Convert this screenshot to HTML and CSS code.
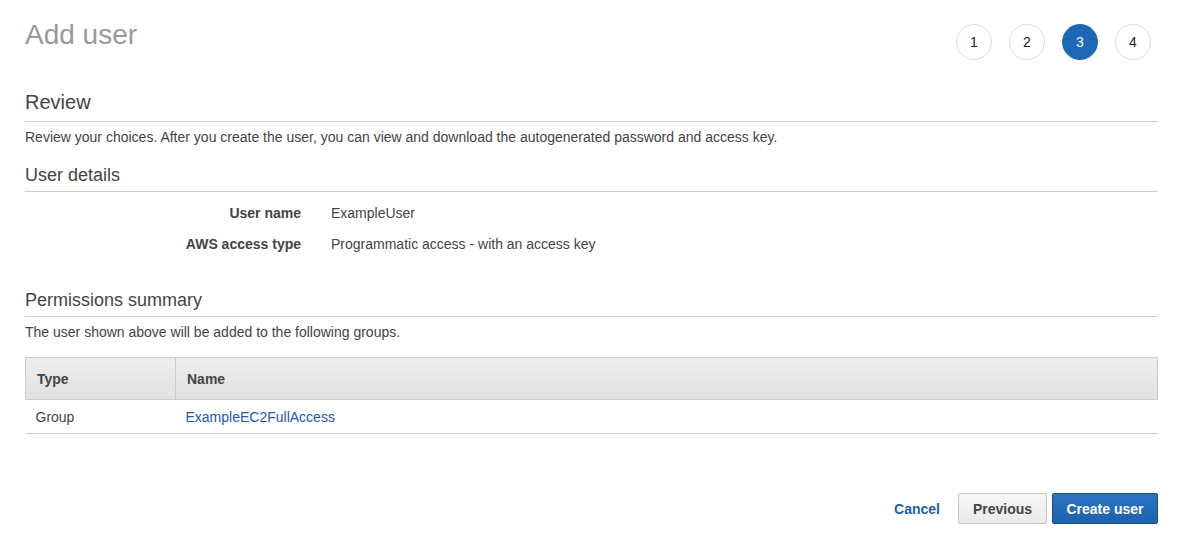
FILE: index.html
```html
<!DOCTYPE html>
<html>
<head>
<meta charset="utf-8">
<link rel="stylesheet" href="styles.css">
</head>
<body>
<div class="page">
  <div class="header">
    <h1 class="title">Add user</h1>
    <ol class="steps">
      <li class="step">1</li>
      <li class="step">2</li>
      <li class="step active">3</li>
      <li class="step">4</li>
    </ol>
  </div>

  <h2 class="section-title review">Review</h2>
  <p class="desc">Review your choices. After you create the user, you can view and download the autogenerated password and access key.</p>

  <h3 class="sub-title">User details</h3>
  <div class="details">
    <div class="label">User name</div><div class="value">ExampleUser</div>
    <div class="label">AWS access type</div><div class="value">Programmatic access - with an access key</div>
  </div>

  <h3 class="sub-title perm">Permissions summary</h3>
  <p class="desc">The user shown above will be added to the following groups.</p>

  <table class="groups">
    <thead>
      <tr><th class="col-type">Type</th><th>Name</th></tr>
    </thead>
    <tbody>
      <tr><td>Group</td><td><a class="link" href="#">ExampleEC2FullAccess</a></td></tr>
    </tbody>
  </table>

  <div class="actions">
    <a class="cancel" href="#">Cancel</a>
    <button class="btn btn-secondary">Previous</button>
    <button class="btn btn-primary">Create user</button>
  </div>
</div>
</body>
</html>
```

FILE: styles.css
```css
* { box-sizing: border-box; }
body {
  margin: 0;
  font-family: "Liberation Sans", Arial, sans-serif;
  color: #444;
  background: #fff;
  font-size: 14px;
}
.page {
  width: 1133px;
  margin-left: 25px;
}
.header {
  display: flex;
  justify-content: space-between;
  align-items: flex-start;
  height: 85px;
}
.title {
  margin: 0;
  padding-top: 19px;
  font-size: 28px;
  font-weight: normal;
  color: #999;
  line-height: 32px;
}
.steps {
  list-style: none;
  margin: 24px 7px 0 0;
  padding: 0;
  display: flex;
  gap: 17px;
}
.step {
  width: 36px;
  height: 36px;
  border: 1px solid #ddd;
  border-radius: 50%;
  display: flex;
  align-items: center;
  justify-content: center;
  font-size: 14px;
  color: #222;
}
.step.active {
  background: #1e67b4;
  border-color: #1e67b4;
  color: #fff;
}
.section-title {
  margin: 0;
  font-size: 20px;
  font-weight: normal;
  color: #444;
  line-height: 24px;
  padding-bottom: 7px;
  border-bottom: 1px solid #ccc;
}
.review { margin-top: 5px; }
.desc {
  margin: 5px 0 0;
  line-height: 20px;
  font-size: 14px;
  color: #444;
}
.sub-title {
  margin: 17px 0 0;
  font-size: 18px;
  font-weight: normal;
  color: #444;
  line-height: 22px;
  padding-bottom: 5px;
  border-bottom: 1px solid #ccc;
}
.sub-title.perm { margin-top: 35px; }
.details {
  display: grid;
  grid-template-columns: 276px 1fr;
  column-gap: 30px;
  row-gap: 11px;
  margin-top: 11px;
  line-height: 20px;
}
.label {
  text-align: right;
  font-weight: bold;
  color: #444;
}
.value { color: #444; }
.groups {
  width: 100%;
  border-collapse: collapse;
  margin-top: 15px;
  font-size: 14px;
}
.groups th {
  text-align: left;
  font-weight: bold;
  color: #444;
  height: 42px;
  padding: 0 11px;
  background: linear-gradient(#eeeeee, #e1e1e1);
  border: 1px solid #ccc;
}
.groups th.col-type { width: 150px; }
.groups td {
  height: 34px;
  padding: 0 10px;
  border-bottom: 1px solid #ccc;
  color: #444;
}
.link { color: #2456b8; text-decoration: none; }
.actions {
  display: flex;
  justify-content: flex-end;
  align-items: center;
  margin-top: 59px;
}
.cancel {
  color: #1a5fa8;
  font-weight: bold;
  text-decoration: none;
  margin-right: 18px;
}
.btn {
  font-family: "Liberation Sans", Arial, sans-serif;
  font-size: 14px;
  font-weight: bold;
  height: 31px;
  border-radius: 2px;
  cursor: pointer;
}
.btn-secondary {
  width: 89px;
  color: #444;
  background: linear-gradient(#f7f7f7, #e9e9e9);
  border: 1px solid #c6c6c6;
  margin-right: 5px;
}
.btn-primary {
  width: 106px;
  color: #fff;
  background: linear-gradient(#2a73c4, #1d62ad);
  border: 1px solid #17508e;
}
```
